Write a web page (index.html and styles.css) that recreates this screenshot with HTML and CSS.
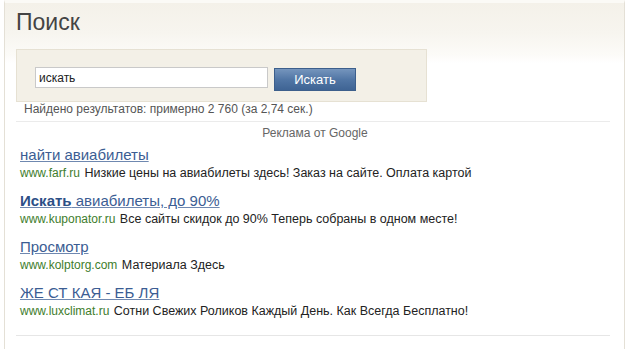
FILE: index.html
```html
<!DOCTYPE html>
<html lang="ru">
<head>
    <meta charset="UTF-8">
    <title>Поиск</title>
    <link rel="stylesheet" href="styles.css">
</head>
<body>
    <div class="page">
        <h1 class="title">Поиск</h1>

        <form class="search-box" onsubmit="return false">
            <input type="text" class="search-input" value="искать">
            <button class="search-btn">Искать</button>
        </form>

        <div class="stats">Найдено результатов: примерно 2 760 (за 2,74 сек.)</div>

        <div class="ads">
            <div class="ads-label">Реклама от Google</div>

            <div class="ad">
                <a href="#" class="ad-title">найти авиабилеты</a>
                <div class="ad-line"><span class="ad-url">www.farf.ru</span> Низкие цены на авиабилеты здесь! Заказ на сайте. Оплата картой</div>
            </div>

            <div class="ad">
                <a href="#" class="ad-title"><b>Искать</b> авиабилеты, до 90%</a>
                <div class="ad-line"><span class="ad-url">www.kuponator.ru</span> Все сайты скидок до 90% Теперь собраны в одном месте!</div>
            </div>

            <div class="ad">
                <a href="#" class="ad-title">Просмотр</a>
                <div class="ad-line"><span class="ad-url">www.kolptorg.com</span> Материала Здесь</div>
            </div>

            <div class="ad">
                <a href="#" class="ad-title">ЖЕ СТ КАЯ - ЕБ ЛЯ</a>
                <div class="ad-line"><span class="ad-url">www.luxclimat.ru</span> Сотни Свежих Роликов Каждый День. Как Всегда Бесплатно!</div>
            </div>
        </div>
    </div>
</body>
</html>
```

FILE: styles.css
```css
* {
    box-sizing: border-box;
    margin: 0;
    padding: 0;
}

body {
    font-family: "Liberation Sans", Arial, sans-serif;
    background: #fff;
    color: #222;
}

.page {
    margin-left: 4px;
    width: 621px;
    min-height: 349px;
    border-left: 1px solid #e4e0d6;
    border-right: 1px solid #e4e0d6;
    border-top: 3px solid #fbfaf6;
    background: linear-gradient(#f4f1e9 0, #f7f5ef 30px, #fcfbf8 52px, #fff 60px);
    padding: 0 13px 0 11px;
}

.title {
    font-size: 23px;
    font-weight: normal;
    color: #444;
    line-height: 26px;
    padding-top: 6px;
    height: 46px;
}

.search-box {
    display: flex;
    align-items: flex-start;
    gap: 6px;
    width: 411px;
    height: 53px;
    padding: 17px 0 0 18px;
    background: #f3f0e7;
    border: 1px solid #e6e1d3;
}

.search-input {
    width: 233px;
    height: 21px;
    border: 1px solid #c9c9c9;
    background: #fff;
    font-family: inherit;
    font-size: 12px;
    color: #222;
    padding: 0 3px;
    outline: none;
}

.search-btn {
    width: 82px;
    height: 23px;
    margin-top: 1px;
    border: 1px solid #3c5f8c;
    background: linear-gradient(#7595bd, #5176a5 50%, #3f6494);
    color: #fff;
    font-family: inherit;
    font-size: 13px;
}

.stats {
    font-size: 12px;
    line-height: 14px;
    color: #555;
    padding-left: 8px;
    height: 19px;
}

.ads {
    width: 594px;
    border-top: 1px solid #ebebeb;
    border-bottom: 1px solid #e6e6e6;
    padding: 4px 0 15px 4px;
}

.ads-label {
    text-align: center;
    font-size: 12px;
    line-height: 14px;
    color: #666;
    margin-bottom: 6px;
}

.ad {
    margin-bottom: 10px;
}

.ad:last-child {
    margin-bottom: 0;
}

.ad-title {
    display: inline-block;
    font-size: 15px;
    line-height: 18px;
    color: #3b5d93;
    text-decoration: underline;
    text-decoration-color: #6f88b0;
}

.ad-title b {
    color: #2c4f86;
}

.ad-line {
    font-size: 12.5px;
    line-height: 18px;
    color: #222;
}

.ad-url {
    font-size: 12px;
    color: #3e7d2c;
    margin-right: 1px;
}
```
